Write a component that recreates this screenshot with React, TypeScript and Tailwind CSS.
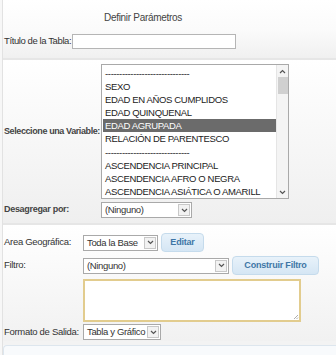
// Formulario "Definir Parámetros"

const variables = [
  "------------------------------",
  "SEXO",
  "EDAD EN AÑOS CUMPLIDOS",
  "EDAD QUINQUENAL",
  "EDAD AGRUPADA",
  "RELACIÓN DE PARENTESCO",
  "------------------------------",
  "ASCENDENCIA PRINCIPAL",
  "ASCENDENCIA AFRO O NEGRA",
  "ASCENDENCIA ASIÁTICA O AMARILL",
];

function Chevron({ up = false }: { up?: boolean }) {
  return (
    <svg width="7" height="5" viewBox="0 0 7 5" className={up ? "rotate-180" : ""}>
      <path d="M1 1 L3.5 3.5 L6 1" fill="none" stroke="#555" strokeWidth="1.2" />
    </svg>
  );
}

// Desplegable simple con la flecha a la derecha
function Select({ value, width }: { value: string; width: string }) {
  return (
    <div className={`flex h-[16px] items-stretch border border-[#a9a9a9] bg-white ${width}`}>
      <span className="flex-1 overflow-hidden whitespace-nowrap pl-[3px] text-[9.5px] leading-[14px] tracking-[-0.35px] text-[#333]">
        {value}
      </span>
      <span className="m-[1px] flex w-[12px] items-center justify-center border border-[#c8c8c8] bg-[#f2f2f2]">
        <Chevron />
      </span>
    </div>
  );
}

function Button({ label, width }: { label: string; width: string }) {
  return (
    <div
      className={`flex h-[19px] items-center justify-center whitespace-nowrap rounded-[4px] border border-[#c5dbec] bg-gradient-to-b from-[#e8f2fa] to-[#d5e6f4] text-[9px] font-bold tracking-[-0.2px] text-[#3e76a6] ${width}`}
    >
      {label}
    </div>
  );
}

export default function App() {
  return (
    <div
      className="h-[355px] w-[336px] overflow-hidden bg-[#f7f7f7] text-[#333]"
      style={{ fontFamily: "'Liberation Sans', Arial, sans-serif" }}
    >
      <div className="ml-[2px] flex flex-col border-l border-[#e2e2e2]">
        {/* Titulo y nombre de la tabla */}
        <div className="flex h-[58px] flex-col bg-gradient-to-b from-white via-[#fbfbfb] to-[#f0f0f0]">
          <div className="pl-[101px] pt-[11px] text-[10px] leading-[13px] tracking-[-0.3px] text-[#444]">Definir Parámetros</div>
          <div className="mt-[10px] flex items-center gap-[1px] pl-[1px]">
            <span className="whitespace-nowrap text-[9.5px] tracking-[-0.4px]">Título de la Tabla:</span>
            <div className="h-[15px] w-[164px] border border-[#b5b5b5] bg-white" />
          </div>
        </div>

        {/* Seleccion de variable */}
        <div className="flex h-[165px] flex-col border-t-[2px] border-[#e6e6e6] bg-gradient-to-b from-white to-[#efefef] pt-[4px]">
          <div className="flex items-center">
            <span className="w-[98px] whitespace-nowrap pl-[1px] text-[9px] font-bold tracking-[-0.4px] text-[#444]">Seleccione una Variable:</span>
            <div className="flex h-[135px] w-[188px] border border-[#a9a9a9] bg-white">
              <div className="flex flex-1 flex-col pl-[1px] pt-[2px]">
                {variables.map((v, i) => (
                  <div
                    key={i}
                    className={`h-[13.3px] overflow-hidden whitespace-nowrap pl-[2px] text-[9.5px] leading-[13px] tracking-[-0.35px] ${
                      v === "EDAD AGRUPADA" ? "bg-[#6b6b6b] text-white" : "text-[#222]"
                    }`}
                  >
                    {v}
                  </div>
                ))}
              </div>
              {/* Barra de desplazamiento */}
              <div className="flex w-[12px] flex-col items-center border-l border-[#e5e5e5] bg-[#f4f4f4]">
                <div className="flex h-[12px] items-center">
                  <Chevron up />
                </div>
                <div className="h-[17px] w-[10px] bg-[#d0d0d0]" />
                <div className="flex-1" />
                <div className="flex h-[12px] items-center">
                  <Chevron />
                </div>
              </div>
            </div>
          </div>
          <div className="mt-[3px] flex items-center">
            <span className="w-[98px] whitespace-nowrap pl-[1px] text-[9px] font-bold tracking-[-0.3px] text-[#444]">Desagregar por:</span>
            <Select value="(Ninguno)" width="w-[91px]" />
          </div>
        </div>

        {/* Area, filtro y formato */}
        <div className="flex h-[118px] flex-col gap-[4px] border-t-[2px] border-[#e6e6e6] bg-gradient-to-b from-white to-[#f1f1f1] pt-[8px]">
          <div className="flex items-center">
            <span className="w-[80px] whitespace-nowrap pl-[1px] text-[9.5px] tracking-[-0.3px]">Area Geográfica:</span>
            <Select value="Toda la Base" width="w-[75px]" />
            <div className="ml-[3px]">
              <Button label="Editar" width="w-[43px]" />
            </div>
          </div>
          <div className="flex items-center">
            <span className="w-[80px] whitespace-nowrap pl-[1px] text-[9.5px] tracking-[-0.3px]">Filtro:</span>
            <Select value="(Ninguno)" width="w-[146px]" />
            <div className="ml-[3px]">
              <Button label="Construir Filtro" width="w-[87px]" />
            </div>
          </div>
          <div className="flex">
            <div className="w-[80px]" />
            <div className="relative h-[43px] w-[218px] border-2 border-[#e2cc8e] bg-white">
              <svg width="6" height="6" viewBox="0 0 6 6" className="absolute bottom-0 right-0">
                <path d="M5 1 L1 5 M5 3.5 L3.5 5" stroke="#999" strokeWidth="0.8" />
              </svg>
            </div>
          </div>
          <div className="-mt-[2px] flex items-center">
            <span className="w-[80px] whitespace-nowrap pl-[1px] text-[9.5px] tracking-[-0.3px]">Formato de Salida:</span>
            <Select value="Tabla y Gráfico" width="w-[78px]" />
          </div>
        </div>

        {/* Siguiente bloque */}
        <div className="h-[4px] bg-[#f3f3f3]" />
        <div className="h-[20px] rounded-tl-[4px] border-t border-l border-[#dde6ee] bg-[#f8fafc]" />
      </div>
    </div>
  );
}
